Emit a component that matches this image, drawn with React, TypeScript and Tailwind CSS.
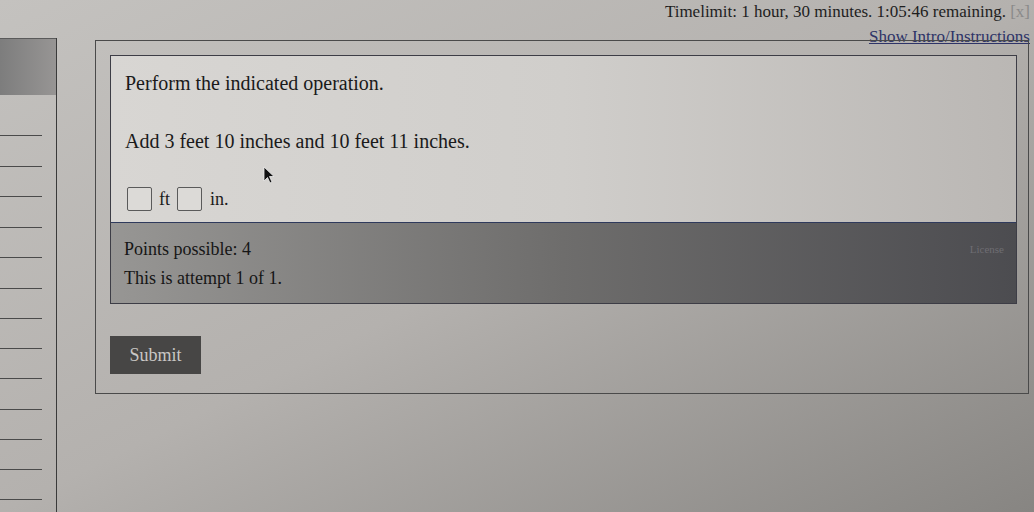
import React from 'react';

const sideLines = [135, 166, 196, 227, 257, 288, 318, 348, 378, 409, 439, 469, 499];

function Cursor() {
  return (
    <svg width="14" height="20" viewBox="0 0 14 20" className="absolute left-[263px] top-[166px]">
      <path d="M1 1 L1 15 L4.5 11.5 L7 17 L9 16 L6.5 10.5 L11 10.5 Z" fill="#111" stroke="#eee" strokeWidth="0.8" />
    </svg>
  );
}

export default function App() {
  return (
    <div className="relative w-[1034px] h-[512px] overflow-hidden bg-gradient-to-br from-[#c4c2bf] via-[#b4b1ae] to-[#878582] font-['Liberation_Serif',serif] text-[#1a1a1a]">
      {/* sidebar */}
      <div className="absolute left-0 top-[38px] w-[57px] h-[474px] border-r border-[#3a3a3a]">
        <div className="h-[57px] bg-gradient-to-r from-[#7d7d7d] to-[#979594] border-t border-[#5a5a5a]" />
      </div>
      {sideLines.map(y => (
        <div key={y} className="absolute left-0 w-[42px] h-px bg-[#4a4a4a]" style={{ top: y }} />
      ))}

      {/* header */}
      <div className="absolute right-[4px] top-[1px] text-right">
        <div className="text-[17px] leading-[21px] text-[#1e1e1e]">
          Timelimit: 1 hour, 30 minutes. 1:05:46 remaining. <span className="text-[#8a8a8a]">[x]</span>
        </div>
        <div className="mt-[4px] text-[17px] leading-[21px] text-[#2e3468] underline">Show Intro/Instructions</div>
      </div>

      {/* outer box */}
      <div className="absolute left-[95px] top-[40px] w-[934px] h-[354px] border border-[#4a4a4a] pl-[14px] pr-[11px] pt-[14px]">
        <div className="border border-[#3d3d46] bg-gradient-to-r from-[#d8d6d3] via-[#d0cecb] to-[#bab7b4]">
          <div className="pl-[14px] pt-[13px] pb-[9px] text-[20px]">
            <p className="leading-[28px]">Perform the indicated operation.</p>
            <p className="mt-[30px] leading-[28px]">Add 3 feet 10 inches and 10 feet 11 inches.</p>
            <div className="mt-[30px] flex items-center pl-[2px] text-[18px] leading-[28px]">
              <span className="w-[25px] h-[24px] border border-[#5a5a5a] rounded-[2px] bg-[#dcdad7]" />
              <span className="ml-[7px]">ft</span>
              <span className="ml-[7px] w-[25px] h-[24px] border border-[#5a5a5a] rounded-[2px] bg-[#dcdad7]" />
              <span className="ml-[8px]">in.</span>
            </div>
          </div>
          <div className="flex justify-between border-t border-[#2f3a5c] bg-gradient-to-r from-[#979694] via-[#6e6d6c] to-[#4c4c50] pl-[13px] pr-[12px] pt-[12px] pb-[10px] text-[18px]">
            <div className="leading-[29px] text-[#161616]">
              <div>Points possible: 4</div>
              <div>This is attempt 1 of 1.</div>
            </div>
            <div className="text-[11px] leading-[29px] text-[#6e6d72]">License</div>
          </div>
        </div>
        <button className="mt-[32px] w-[91px] h-[38px] bg-[#474645] text-[#c9c7c4] text-[18px]">Submit</button>
      </div>

      <Cursor />
    </div>
  );
}
